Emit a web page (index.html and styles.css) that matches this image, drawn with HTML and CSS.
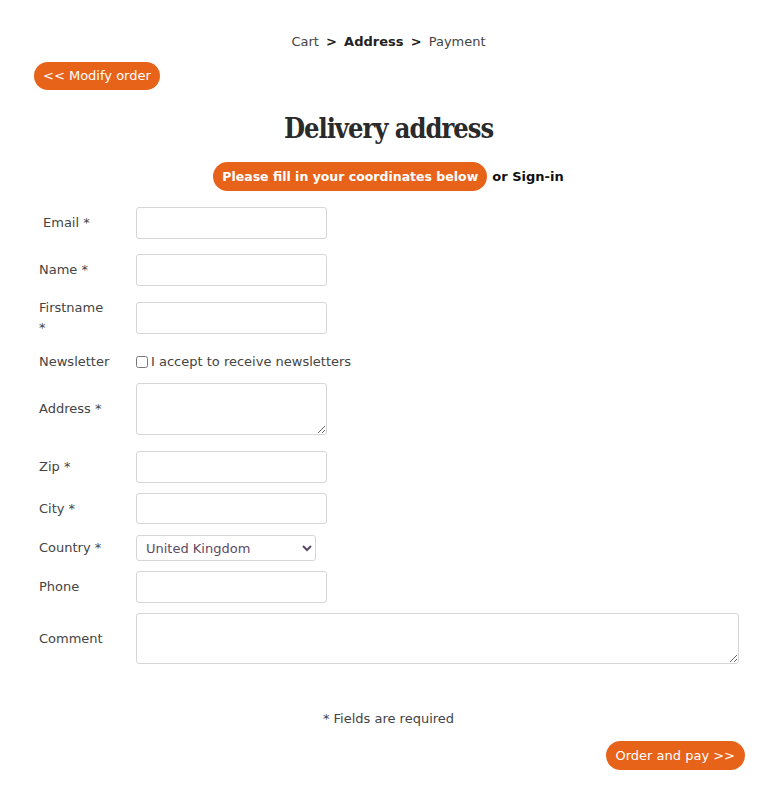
FILE: index.html
```html
<!DOCTYPE html>
<html lang="en">
<head>
    <meta charset="UTF-8">
    <meta name="viewport" content="width=device-width, initial-scale=1.0">
    <title>Delivery address</title>
    <link rel="stylesheet" href="styles.css">
</head>
<body>
    <div class="page">
        <div class="steps">
            <span class="step">Cart</span>
            <span class="sep">&gt;</span>
            <span class="step current">Address</span>
            <span class="sep">&gt;</span>
            <span class="step">Payment</span>
        </div>

        <div class="back-row">
            <a href="#" class="pill">&lt;&lt; Modify order</a>
        </div>

        <h1 class="title">Delivery address</h1>

        <div class="intro">
            <span class="pill pill-bold">Please fill in your coordinates below</span>
            <a href="#" class="signin">or Sign-in</a>
        </div>

        <form class="address-form">
            <div class="row">
                <label class="label indent" for="email">Email *</label>
                <input type="text" id="email">
            </div>
            <div class="row row-name">
                <label class="label" for="name">Name *</label>
                <input type="text" id="name">
            </div>
            <div class="row row-first">
                <label class="label narrow" for="firstname">Firstname *</label>
                <input type="text" id="firstname">
            </div>
            <div class="row row-news">
                <span class="label">Newsletter</span>
                <label class="check"><input type="checkbox">I accept to receive newsletters</label>
            </div>
            <div class="row row-address">
                <label class="label" for="address">Address *</label>
                <textarea id="address" class="small-area"></textarea>
            </div>
            <div class="row row-zip">
                <label class="label" for="zip">Zip *</label>
                <input type="text" id="zip">
            </div>
            <div class="row">
                <label class="label" for="city">City *</label>
                <input type="text" id="city" class="short">
            </div>
            <div class="row row-country">
                <label class="label" for="country">Country *</label>
                <select id="country">
                    <option>United Kingdom</option>
                    <option>France</option>
                    <option>Germany</option>
                </select>
            </div>
            <div class="row">
                <label class="label" for="phone">Phone</label>
                <input type="text" id="phone">
            </div>
            <div class="row">
                <label class="label" for="comment">Comment</label>
                <textarea id="comment" class="wide-area"></textarea>
            </div>
        </form>

        <p class="required">* Fields are required</p>

        <div class="submit-row">
            <a href="#" class="pill pill-big">Order and pay &gt;&gt;</a>
        </div>
    </div>
</body>
</html>
```

FILE: styles.css
```css
body {
    margin: 0;
    font-family: "DejaVu Sans", "Noto Sans", sans-serif;
    font-size: 13px;
    color: #333;
    background: #fff;
}

.page {
    padding: 32px 32px 0 32px;
}

.steps {
    text-align: center;
    font-size: 13px;
    line-height: 20px;
    color: #444;
}

.sep {
    font-weight: bold;
    margin: 0 3px;
    color: #222;
}

.current {
    font-weight: bold;
    color: #222;
}

.back-row {
    margin-top: 10px;
    padding-left: 2px;
}

.pill {
    display: inline-block;
    background-color: #e8631a;
    color: #fff;
    text-decoration: none;
    border-radius: 15px;
    padding: 0 9px;
    height: 28px;
    line-height: 28px;
    font-size: 13px;
}

.pill-big {
    height: 29px;
    line-height: 29px;
    padding: 0 10px;
}

.pill-bold {
    font-weight: bold;
    font-size: 12.5px;
    height: 29px;
    line-height: 29px;
}

.title {
    margin: 21px 0 0 0;
    text-align: center;
    font-family: "DejaVu Serif Condensed", "DejaVu Serif", serif;
    font-stretch: condensed;
    font-weight: 900;
    font-size: 27px;
    line-height: 36px;
    letter-spacing: -1px;
    color: #2a2a2a;
}

.intro {
    margin-top: 15px;
    text-align: center;
}

.signin {
    color: #111;
    font-weight: bold;
    text-decoration: none;
    margin-left: 1px;
}

.address-form {
    margin-top: 16px;
    display: flex;
    flex-direction: column;
    gap: 10px;
    padding: 0 6px 0 7px;
}

.row {
    display: flex;
    align-items: center;
}

.row-name {
    margin-top: 5px;
}

.row-first {
    margin-top: 2px;
}

.row-news {
    margin-top: 4px;
}

.row-address {
    margin-top: 1px;
}

.row-zip {
    margin-top: 6px;
}

.row-country {
    margin-top: 1px;
}

.label {
    width: 97px;
    flex-shrink: 0;
    color: #444;
    line-height: 20px;
}

.indent {
    padding-left: 4px;
    width: 93px;
}

.narrow {
    width: 70px;
    margin-right: 27px;
}

input[type="text"] {
    width: 191px;
    height: 32px;
    box-sizing: border-box;
    border: 1px solid #d6d6d6;
    border-radius: 3px;
    padding: 4px 8px;
    font-family: inherit;
}

input.short {
    height: 31px;
}

.check {
    display: flex;
    align-items: center;
    color: #444;
    line-height: 20px;
}

.check input {
    margin: 0 3px 0 0;
    width: 12px;
    height: 12px;
}

textarea {
    box-sizing: border-box;
    border: 1px solid #d6d6d6;
    border-radius: 3px;
    font-family: inherit;
    resize: both;
}

.small-area {
    width: 191px;
    height: 52px;
}

.wide-area {
    flex: 1;
    height: 51px;
}

select {
    width: 180px;
    height: 26px;
    border: 1px solid #d6d6d6;
    border-radius: 3px;
    background: #fff;
    color: #5b4a66;
    font-family: inherit;
    font-size: 13px;
    padding: 0 5px;
}

.required {
    text-align: center;
    margin: 45px 0 0 0;
    line-height: 20px;
    color: #444;
}

.submit-row {
    margin-top: 12px;
    text-align: right;
}
```
